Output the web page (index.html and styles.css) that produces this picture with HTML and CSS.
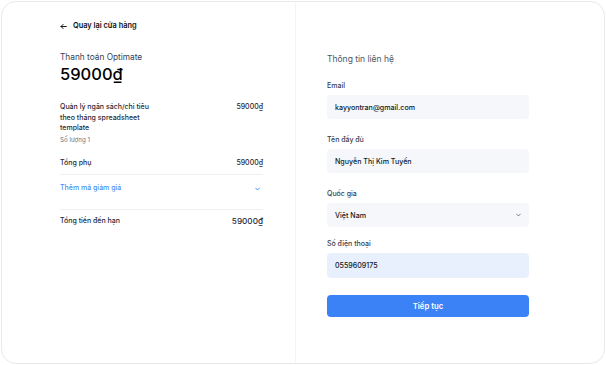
FILE: index.html
```html
<!DOCTYPE html>
<html lang="vi">
<head>
<meta charset="utf-8">
<link rel="stylesheet" href="styles.css">
</head>
<body>
<div class="card">
  <section class="summary">
    <a class="back" href="#">
      <svg width="7" height="7" viewBox="0 0 10 10" fill="none" stroke="#111" stroke-width="1.4" stroke-linecap="round" stroke-linejoin="round"><path d="M9 5H1.5M4.5 2L1.5 5l3 3"/></svg>
      <span>Quay lại cửa hàng</span>
    </a>
    <div class="pay-title">Thanh toán Optimate</div>
    <div class="pay-amount">59000₫</div>
    <div class="item">
      <div class="item-info">
        <div class="item-name">Quản lý ngân sách/chi tiêu theo tháng spreadsheet template</div>
        <div class="item-qty">Số lượng 1</div>
      </div>
      <div class="item-price">59000₫</div>
    </div>
    <div class="row subtotal">
      <span>Tổng phụ</span><span>59000₫</span>
    </div>
    <div class="coupon">
      <span>Thêm mã giảm giá</span>
      <svg width="5" height="4" viewBox="0 0 8 5" fill="none" stroke="#3b82f6" stroke-width="1.5" stroke-linecap="round" stroke-linejoin="round"><path d="M1 1l3 3 3-3"/></svg>
    </div>
    <div class="row total">
      <span>Tổng tiền đến hạn</span><span class="total-val">59000₫</span>
    </div>
  </section>
  <section class="contact">
    <h2 class="contact-title">Thông tin liên hệ</h2>
    <div class="field">
      <label class="label">Email</label>
      <div class="input">kayyontran@gmail.com</div>
    </div>
    <div class="field">
      <label class="label">Tên đầy đủ</label>
      <div class="input">Nguyễn Thị Kim Tuyến</div>
    </div>
    <div class="field field-tight">
      <label class="label">Quốc gia</label>
      <div class="input select"><span>Việt Nam</span>
        <svg width="5" height="4" viewBox="0 0 8 5" fill="none" stroke="#6b7280" stroke-width="1.5" stroke-linecap="round" stroke-linejoin="round"><path d="M1 1l3 3 3-3"/></svg>
      </div>
    </div>
    <div class="field field-last">
      <label class="label">Số điện thoại</label>
      <div class="input autofill">0559609175</div>
    </div>
    <button class="btn">Tiếp tục</button>
  </section>
</div>
</body>
</html>
```
FILE: styles.css
```css
* { box-sizing: border-box; }
html, body { margin: 0; padding: 0; background: #fff; }
body {
  padding: 1px;
  font-family: Inter, "Noto Sans", sans-serif;
  color: #111827;
}
.card {
  display: flex;
  width: 604px;
  height: 363px;
  border: 1px solid #e8e9ec;
  border-radius: 15px;
  overflow: hidden;
}
.summary {
  width: 294px;
  border-right: 1px solid #f3f4f6;
  padding: 19px 32px 0 58px;
  display: flex;
  flex-direction: column;
}
.back {
  display: flex;
  align-items: center;
  gap: 6px;
  font-size: 7.4px;
  font-weight: 600;
  color: #111;
  text-decoration: none;
  height: 10px;
  line-height: 10px;
}
.pay-title {
  margin-top: 21px;
  font-size: 8.3px;
  color: #374151;
  line-height: 10px;
}
.pay-amount {
  font-size: 16.5px;
  font-weight: 500;
  color: #000;
  line-height: 20px;
  margin-top: 2px;
}
.item {
  display: flex;
  justify-content: space-between;
  margin-top: 18px;
}
.item-name {
  width: 94px;
  font-size: 7px;
  line-height: 10.5px;
  font-weight: 500;
  color: #1f2937;
}
.item-qty {
  margin-top: 1px;
  font-size: 6.2px;
  color: #6b7280;
  line-height: 9px;
}
.item-price, .row {
  font-size: 7px;
  font-weight: 500;
  color: #1f2937;
  line-height: 10.5px;
}
.row {
  display: flex;
  justify-content: space-between;
}
.subtotal {
  margin-top: 14px;
  padding-bottom: 6px;
  border-bottom: 1px solid #eef0f2;
}
.coupon {
  display: flex;
  justify-content: space-between;
  padding: 8px 3px 0 0;
  height: 35px;
  align-items: flex-start;
  font-size: 7px;
  font-weight: 500;
  color: #4b8df8;
  line-height: 10.5px;
  border-bottom: 1px solid #eef0f2;
}
.coupon svg { margin-top: 4px; }
.total {
  margin-top: 5px;
  align-items: center;
  line-height: 12px;
}
.total-val { font-size: 8.2px; }
.contact {
  flex: 1;
  padding: 51px 0 0 31px;
}
.contact-title {
  margin: 0 0 16px;
  font-size: 8.5px;
  font-weight: 400;
  color: #4b5563;
  line-height: 12px;
}
.field { width: 202px; margin-bottom: 16px; }
.field-tight { margin-bottom: 12px; }
.field-last { margin-bottom: 17px; }
.label {
  display: block;
  font-size: 7px;
  font-weight: 500;
  color: #374151;
  line-height: 10px;
  margin-bottom: 4px;
}
.input {
  height: 24px;
  background: #f5f7fb;
  border-radius: 4px;
  padding: 0 8px;
  display: flex;
  align-items: center;
  font-size: 7.1px;
  font-weight: 500;
  color: #111827;
}
.select { justify-content: space-between; padding-right: 8px; }
.autofill { background: #e8f0fe; height: 25px; }
.btn {
  display: block;
  width: 202px;
  height: 22px;
  border: 0;
  border-radius: 4px;
  background: #3b82f6;
  color: #fff;
  font-family: inherit;
  font-size: 7.8px;
  font-weight: 600;
}
```
